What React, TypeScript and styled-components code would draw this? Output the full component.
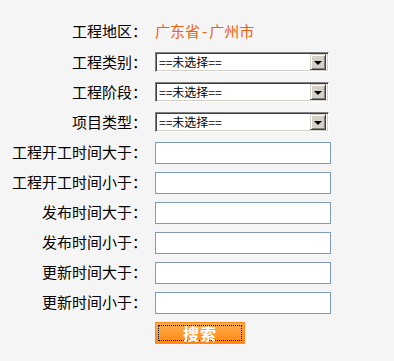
import React from "react";
import styled, { createGlobalStyle } from "styled-components";

const Global = createGlobalStyle`
  html, body { margin: 0; padding: 0; background: #f5f5f5; }
  body { font-family: "Noto Sans CJK SC", "Noto Sans", sans-serif; color: #000; }
`;

const Form = styled.div`
  display: flex;
  flex-direction: column;
  padding-top: 16px;
`;

const Row = styled.div<{ $first?: boolean }>`
  display: flex;
  align-items: flex-start;
  gap: 8px;
  height: ${(p) => (p.$first ? "31px" : "30px")};
  padding-top: 5px;
  box-sizing: border-box;
`;

const Label = styled.div`
  width: 147px;
  flex: none;
  text-align: right;
  font-size: 15px;
  line-height: 20px;
  white-space: nowrap;
`;

const Region = styled.div`
  font-size: 15px;
  line-height: 20px;
  color: #f06010;
`;

const Dash = styled.span`
  display: inline-block;
  padding: 0 2px;
`;

const SelectBox = styled.div`
  width: 174px;
  height: 20px;
  box-sizing: border-box;
  display: flex;
  align-items: center;
  background: #fff;
  border-style: solid;
  border-width: 1px;
  border-color: #808080 #fff #fff #808080;
  box-shadow: inset 1px 1px 0 #404040, inset -1px -1px 0 #d4d0c8;
  padding: 2px 2px 2px 3px;
`;

const SelectText = styled.span`
  flex: 1;
  font-size: 12px;
  line-height: 14px;
`;

const Arrow = styled.span`
  width: 16px;
  height: 16px;
  box-sizing: border-box;
  background: #d4d0c8;
  border-style: solid;
  border-width: 1px;
  border-color: #d4d0c8 #404040 #404040 #d4d0c8;
  box-shadow: inset 1px 1px 0 #fff, inset -1px -1px 0 #808080;
  display: flex;
  align-items: center;
  justify-content: center;
  &::after {
    content: "";
    width: 0;
    height: 0;
    border-left: 4px solid transparent;
    border-right: 4px solid transparent;
    border-top: 4px solid #000;
    margin-top: 1px;
  }
`;

const TextInput = styled.input`
  width: 176px;
  height: 22px;
  box-sizing: border-box;
  border: 1px solid #7f9db9;
  background: #fff;
  margin: 0;
  padding: 0 2px;
  font-size: 12px;
  outline: none;
`;

const SearchButton = styled.button`
  width: 90px;
  height: 22px;
  box-sizing: border-box;
  margin: 0;
  padding: 2px;
  border: 1px solid #ff8a1a;
  background: linear-gradient(#ffb04c, #ff8616);
  cursor: pointer;
  display: flex;
`;

const ButtonInner = styled.span`
  flex: 1;
  border: 1px dotted #000;
  color: #fff;
  font-family: "Noto Sans CJK SC", sans-serif;
  font-weight: bold;
  font-size: 16px;
  line-height: 14px;
  display: flex;
  align-items: center;
  justify-content: center;
  letter-spacing: 1px;
`;

const Select = () => (
  <SelectBox>
    <SelectText>==未选择==</SelectText>
    <Arrow />
  </SelectBox>
);

const selects = ["工程类别：", "工程阶段：", "项目类型："];
const inputs = [
  "工程开工时间大于：",
  "工程开工时间小于：",
  "发布时间大于：",
  "发布时间小于：",
  "更新时间大于：",
  "更新时间小于：",
];

export default function App() {
  return (
    <>
      <Global />
      <Form>
        <Row $first>
          <Label>工程地区：</Label>
          <Region>
            广东省<Dash>-</Dash>广州市
          </Region>
        </Row>
        {selects.map((l) => (
          <Row key={l}>
            <Label>{l}</Label>
            <Select />
          </Row>
        ))}
        {inputs.map((l) => (
          <Row key={l}>
            <Label>{l}</Label>
            <TextInput type="text" />
          </Row>
        ))}
        <Row>
          <Label />
          <SearchButton type="button">
            <ButtonInner>搜索</ButtonInner>
          </SearchButton>
        </Row>
      </Form>
    </>
  );
}
